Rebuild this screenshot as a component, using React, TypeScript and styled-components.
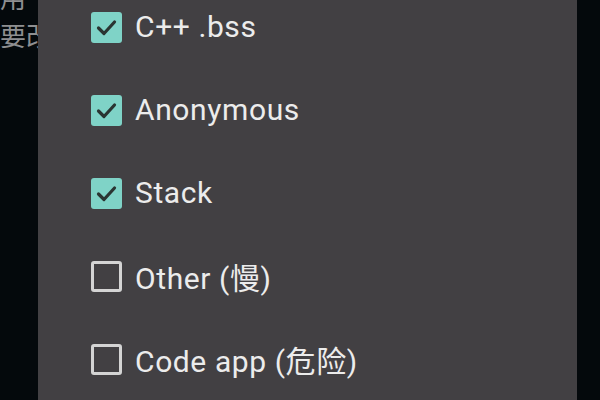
import React from "react";
import styled, { createGlobalStyle } from "styled-components";

const Global = createGlobalStyle`
  html, body { margin: 0; padding: 0; background: #04090c; }
  body { font-family: Roboto, "Noto Sans CJK SC", sans-serif; }
`;

const Screen = styled.div`
  position: relative;
  width: 600px;
  height: 400px;
  overflow: hidden;
  background: #04090c;
`;

const BackText = styled.div`
  display: flex;
  flex-direction: column;
  margin-top: -22px;
  color: #8e8f91;
  font-family: "Noto Sans CJK SC", sans-serif;
  font-size: 26px;
  line-height: 38px;
  white-space: nowrap;
`;

const Dialog = styled.div`
  position: absolute;
  top: 0;
  left: 38px;
  width: 539px;
  height: 400px;
  background: #424043;
  overflow: hidden;
`;

const List = styled.div`
  display: flex;
  flex-direction: column;
  margin-top: -15px;
  padding-left: 53px;
`;

const Row = styled.div`
  display: flex;
  align-items: center;
  gap: 13px;
  height: 83px;
`;

const Box = styled.div<{ $checked: boolean }>`
  box-sizing: border-box;
  width: 31px;
  height: 31px;
  border-radius: 3px;
  display: flex;
  align-items: center;
  justify-content: center;
  background: ${(p) => (p.$checked ? "#7fd3c7" : "transparent")};
  border: ${(p) => (p.$checked ? "none" : "3px solid #d4d4d4")};
  margin-top: 1px;
`;

const Label = styled.span`
  color: #ececec;
  font-family: Roboto, "Noto Sans CJK SC", sans-serif;
  font-size: 30px;
  letter-spacing: 0.6px;
  white-space: nowrap;
`;

const Check = () => (
  <svg width="31" height="31" viewBox="0 0 31 31">
    <path d="M7.5 16 L13 21.5 L23.5 10" fill="none" stroke="#2a3532" strokeWidth="3.2" strokeLinecap="round" strokeLinejoin="round" />
  </svg>
);

const items = [
  { label: "C++ .bss", checked: true },
  { label: "Anonymous", checked: true },
  { label: "Stack", checked: true },
  { label: "Other (慢)", checked: false },
  { label: "Code app (危险)", checked: false },
];

export default function App() {
  return (
    <>
      <Global />
      <Screen>
        <BackText>
          <span>用</span>
          <span>要改</span>
        </BackText>
        <Dialog>
          <List>
            {items.map((it) => (
              <Row key={it.label}>
                <Box $checked={it.checked}>{it.checked && <Check />}</Box>
                <Label>{it.label}</Label>
              </Row>
            ))}
          </List>
        </Dialog>
      </Screen>
    </>
  );
}
